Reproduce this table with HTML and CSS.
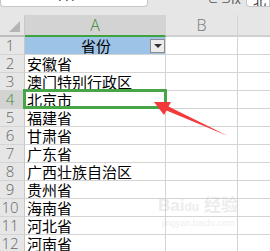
FILE: index.html
```html
<!DOCTYPE html>
<html>
<head>
<meta charset="utf-8">
<link rel="stylesheet" href="styles.css">
</head>
<body>
<div class="app">
  <div class="toolbar">
    <div class="namebox"><span class="nb-text">A4</span></div>
    <div class="fx">⊂ ⊃fx</div>
    <div class="formula">北</div>
  </div>
  <div class="sheet">
    <div class="row head">
      <div class="rh corner"><span class="tri"></span></div>
      <div class="c a hsel">A</div>
      <div class="c b">B</div>
      <div class="c cc"></div>
    </div>
    <div class="row"><div class="rh">1</div><div class="c a title">省份<span class="dd"><span class="ddtri"></span></span></div><div class="c b"></div><div class="c cc"></div></div>
    <div class="row"><div class="rh">2</div><div class="c a">安徽省</div><div class="c b"></div><div class="c cc"></div></div>
    <div class="row"><div class="rh">3</div><div class="c a">澳门特别行政区</div><div class="c b"></div><div class="c cc"></div></div>
    <div class="row"><div class="rh rsel">4</div><div class="c a">北京市</div><div class="c b"></div><div class="c cc"></div></div>
    <div class="row"><div class="rh">5</div><div class="c a">福建省</div><div class="c b"></div><div class="c cc"></div></div>
    <div class="row"><div class="rh">6</div><div class="c a">甘肃省</div><div class="c b"></div><div class="c cc"></div></div>
    <div class="row"><div class="rh">7</div><div class="c a">广东省</div><div class="c b"></div><div class="c cc"></div></div>
    <div class="row"><div class="rh">8</div><div class="c a">广西壮族自治区</div><div class="c b"></div><div class="c cc"></div></div>
    <div class="row"><div class="rh">9</div><div class="c a">贵州省</div><div class="c b"></div><div class="c cc"></div></div>
    <div class="row"><div class="rh">10</div><div class="c a">海南省</div><div class="c b"></div><div class="c cc"></div></div>
    <div class="row"><div class="rh">11</div><div class="c a">河北省</div><div class="c b"></div><div class="c cc"></div></div>
    <div class="row"><div class="rh">12</div><div class="c a">河南省</div><div class="c b"></div><div class="c cc"></div></div>
  </div>
  <div class="selbox"></div>
  <svg class="arrow" width="270" height="251" viewBox="0 0 270 251">
    <polygon points="154,102 171,102 168.5,106.5 228,136 166.5,110.5 164,115" fill="#f23a3a"/>
  </svg>
  <div class="watermark">
    <div class="wm-logo">Bai<span class="wm-du">du</span> 经验</div>
    <div class="wm-url">jingyan.baidu.com</div>
  </div>
</div>
</body>
</html>
```

FILE: styles.css
```css
html, body {
  margin: 0;
  padding: 0;
  background: #e6e6e6;
}
.app {
  position: relative;
  width: 270px;
  height: 251px;
  overflow: hidden;
  background: #e6e6e6;
  font-family: "Noto Sans CJK SC", "Noto Sans", sans-serif;
}
.toolbar {
  height: 15px;
  display: flex;
  align-items: flex-start;
}
.namebox {
  width: 146px;
  height: 6px;
  background: #fff;
  border: 1px solid #c6c6c6;
  border-top: none;
  border-radius: 0 0 4px 4px;
  position: relative;
  overflow: hidden;
}
.nb-text {
  position: absolute;
  left: 58px;
  top: -11px;
  font: 13px "Liberation Sans", sans-serif;
  color: #333;
}
.fx {
  width: 98px;
  height: 6px;
  overflow: hidden;
  font: 12px "Liberation Sans", sans-serif;
  color: #555;
  line-height: 0;
  padding-left: 60px;
  box-sizing: border-box;
}
.formula {
  flex: 1;
  height: 6px;
  background: #fff;
  border: 1px solid #c6c6c6;
  border-top: none;
  border-radius: 0 0 0 4px;
  overflow: hidden;
  font-size: 13px;
  line-height: 0;
  color: #333;
  padding-left: 6px;
}
.sheet {
  background: #fff;
}
.row {
  display: grid;
  grid-template-columns: 25px 141px 72px 1fr;
  height: 18px;
}
.row.head {
  height: 22px;
  background: #e6e6e6;
}
.rh {
  background: #e6e6e6;
  border-right: 1px solid #c8c8c8;
  border-bottom: 1px solid #d4d4d4;
  box-sizing: border-box;
  font: 15px "Open Sans", "Liberation Sans", sans-serif;
  font-weight: 300;
  color: #666;
  text-align: center;
  line-height: 17px;
  padding-right: 4px;
}
.rh.rsel {
  background: #d3d3d3;
  color: #3b8a3b;
}
.corner {
  position: relative;
  border-bottom: 2px solid #bdbdbd;
}
.tri {
  position: absolute;
  left: 9px;
  top: 6px;
  width: 0;
  height: 0;
  border-left: 11px solid transparent;
  border-bottom: 11px solid #b5b5b5;
}
.c {
  border-right: 1px solid #d4d4d4;
  border-bottom: 1px solid #d4d4d4;
  box-sizing: border-box;
  font-size: 15px;
  line-height: 17px;
  color: #000;
  padding-left: 2px;
  white-space: nowrap;
  overflow: hidden;
}
.c.cc {
  border-right: none;
}
.head .c {
  background: #e6e6e6;
  border-bottom: 2px solid #d0d0d0;
  font: 16px "Open Sans", "Liberation Sans", sans-serif;
  font-weight: 300;
  color: #777;
  text-align: center;
  line-height: 21px;
  padding-left: 0;
}
.head .c.hsel {
  background: #d3d3d3;
  border-bottom: 2px solid #3fa33f;
  color: #3b8a3b;
}
.c.title {
  background: #9dc3e6;
  text-align: center;
  position: relative;
}
.dd {
  position: absolute;
  right: 0;
  top: 2px;
  width: 13px;
  height: 12px;
  background: #ececec;
  border: 1px solid #8c8c8c;
  display: flex;
  align-items: center;
  justify-content: center;
}
.ddtri {
  width: 0;
  height: 0;
  border-left: 4px solid transparent;
  border-right: 4px solid transparent;
  border-top: 4px solid #333;
}
.selbox {
  position: absolute;
  left: 23px;
  top: 89px;
  width: 144px;
  height: 20px;
  border: 3px solid #46a546;
  box-sizing: border-box;
}
.arrow {
  position: absolute;
  left: 0;
  top: 0;
}
.watermark {
  position: absolute;
  left: 152px;
  top: 196px;
  width: 92px;
  text-align: center;
  color: rgba(200, 200, 200, 0.35);
  font-family: "Liberation Sans", "Noto Sans CJK SC", sans-serif;
}
.wm-logo {
  font-size: 17px;
  font-weight: bold;
  line-height: 20px;
}
.wm-du {
  font-size: 12px;
}
.wm-url {
  font-size: 9px;
  line-height: 12px;
}
```
